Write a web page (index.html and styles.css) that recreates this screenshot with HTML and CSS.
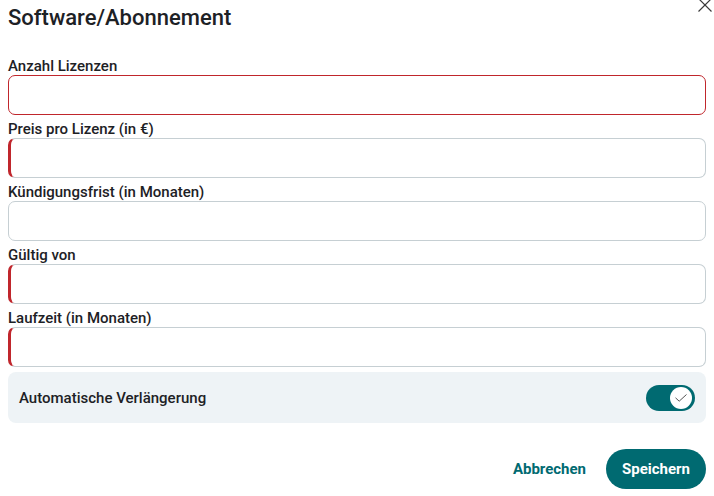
FILE: index.html
```html
<!DOCTYPE html>
<html lang="de">
<head>
<meta charset="utf-8">
<title>Software/Abonnement</title>
<link rel="stylesheet" href="styles.css">
</head>
<body>
<div class="dialog">
  <button class="close" aria-label="Schließen">
    <svg width="16" height="16" viewBox="0 0 16 16"><path d="M1.5 1.5 L14.5 14.5 M14.5 1.5 L1.5 14.5" stroke="#3a3a3a" stroke-width="1.2" fill="none"/></svg>
  </button>
  <h1 class="title">Software/Abonnement</h1>
  <div class="field">
    <label class="label">Anzahl Lizenzen</label>
    <div class="input input-error"></div>
  </div>
  <div class="field">
    <label class="label">Preis pro Lizenz (in €)</label>
    <div class="input input-required"></div>
  </div>
  <div class="field">
    <label class="label">Kündigungsfrist (in Monaten)</label>
    <div class="input"></div>
  </div>
  <div class="field">
    <label class="label">Gültig von</label>
    <div class="input input-required"></div>
  </div>
  <div class="field">
    <label class="label">Laufzeit (in Monaten)</label>
    <div class="input input-required"></div>
  </div>
  <div class="toggle-row">
    <span class="toggle-label">Automatische Verlängerung</span>
    <span class="switch">
      <span class="knob">
        <svg width="14" height="10" viewBox="0 0 14 10"><path d="M1.5 4.8 L5.2 8.2 L12.5 1.5" stroke="#555" stroke-width="1" fill="none"/></svg>
      </span>
    </span>
  </div>
  <div class="actions">
    <button class="btn btn-text">Abbrechen</button>
    <button class="btn btn-primary">Speichern</button>
  </div>
</div>
</body>
</html>
```
FILE: styles.css
```css
* { box-sizing: border-box; }
html, body { margin: 0; padding: 0; background: #fff; }
body {
  font-family: Roboto, "Liberation Sans", Arial, sans-serif;
  color: #1d2125;
}
.dialog {
  position: relative;
  padding: 5px 8px 0 8px;
  width: 714px;
  height: 496px;
}
.close {
  position: absolute;
  left: 697px;
  top: -3px;
  width: 16px;
  height: 16px;
  padding: 0;
  border: 0;
  background: none;
  display: block;
}
.close svg { display: block; }
.title {
  margin: 0 0 21px 0;
  font-size: 22px;
  line-height: 26px;
  font-weight: 500;
  letter-spacing: 0;
}
.field {
  display: flex;
  flex-direction: column;
}
.label {
  display: block;
  font-size: 15px;
  font-weight: 500;
  line-height: 17px;
  padding-top: 6px;
}
.input {
  height: 40px;
  border: 1px solid #c6cfd3;
  border-radius: 7px;
  background: #fff;
}
.input-error {
  border-color: #c0262c;
}
.input-required {
  border-left: 3px solid #c0262c;
}
.toggle-row {
  margin-top: 5px;
  height: 51px;
  background: #eef3f6;
  border-radius: 8px;
  display: flex;
  align-items: center;
  justify-content: space-between;
  padding: 0 11px 0 11px;
}
.toggle-label {
  font-size: 15px;
  font-weight: 500;
}
.switch {
  width: 49px;
  height: 26px;
  border-radius: 13px;
  background: #006a71;
  display: flex;
  align-items: center;
  justify-content: flex-end;
  padding-right: 3px;
}
.knob {
  width: 22px;
  height: 22px;
  border-radius: 50%;
  background: #fff;
  display: flex;
  align-items: center;
  justify-content: center;
}
.knob svg { display: block; }
.actions {
  margin-top: 26px;
  display: flex;
  justify-content: flex-end;
  gap: 4px;
}
.btn {
  font-family: Roboto, "Liberation Sans", Arial, sans-serif;
  font-size: 15px;
  font-weight: 700;
  height: 40px;
  padding: 0 16px;
  border: 0;
  border-radius: 20px;
  cursor: pointer;
}
.btn-text {
  background: transparent;
  color: #006a71;
}
.btn-primary {
  background: #006a71;
  color: #fff;
}
```
